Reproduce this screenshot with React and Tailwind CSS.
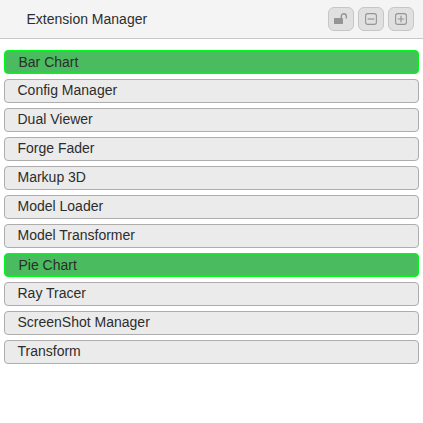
const extensions = [
  { name: 'Bar Chart', active: true },
  { name: 'Config Manager' },
  { name: 'Dual Viewer' },
  { name: 'Forge Fader' },
  { name: 'Markup 3D' },
  { name: 'Model Loader' },
  { name: 'Model Transformer' },
  { name: 'Pie Chart', active: true },
  { name: 'Ray Tracer' },
  { name: 'ScreenShot Manager' },
  { name: 'Transform' },
];

function ToolButton({ label, children }) {
  return (
    <button
      aria-label={label}
      className="flex h-6 w-[26px] items-center justify-center rounded-[6px] border border-[#c6c6c6] bg-[#e0e0e0] text-[#959595]"
    >
      {children}
    </button>
  );
}

function UnlockIcon() {
  return (
    <svg width="14" height="12" viewBox="0 0 14 12" fill="none">
      <rect x="0" y="5" width="9" height="6" rx="0.6" fill="currentColor" />
      <path d="M7.3 5.5V3.2a2.5 2.5 0 0 1 5 0v2.3" stroke="currentColor" strokeWidth="1.4" />
    </svg>
  );
}

function SquareIcon({ plus }) {
  return (
    <svg width="12" height="12" viewBox="0 0 12 12" fill="none" stroke="currentColor">
      <rect x="0.6" y="0.6" width="10.8" height="10.8" rx="2.2" strokeWidth="1.1" />
      <path d={plus ? 'M2.7 6h6.6M6 2.7v6.6' : 'M2.7 6h6.6'} strokeWidth="1.2" />
    </svg>
  );
}

function Row({ name, active }) {
  return (
    <li
      className={
        active
          ? 'flex h-6 items-center rounded-[4px] border border-[#00fa18] bg-[#4abb5e] pl-[13.5px] shadow-[inset_0_0_0_1px_#00fa1880]'
          : 'flex h-6 items-center rounded-[4px] border border-[#adadad] bg-[#ebebeb] pl-[12.5px] pb-[2px]'
      }
    >
      <span className="text-[14px] leading-5">{name}</span>
    </li>
  );
}

export default function App() {
  return (
    <div className="h-[423px] w-[423px] overflow-hidden bg-white font-['Liberation_Sans',Arial,sans-serif] text-[#2d2d2d]">
      <header className="flex h-[39px] items-center justify-between border-b border-[#c8c8c8] bg-[#f4f4f4] pr-[9px] pl-[26.5px]">
        <h1 className="text-[14px] leading-5">Extension Manager</h1>
        <div className="flex gap-1">
          <ToolButton label="Unlock"><UnlockIcon /></ToolButton>
          <ToolButton label="Collapse"><SquareIcon /></ToolButton>
          <ToolButton label="Expand"><SquareIcon plus /></ToolButton>
        </div>
      </header>
      <ul className="flex flex-col gap-[5px] px-1 pt-[11px]">
        {extensions.map((e) => (
          <Row key={e.name} {...e} />
        ))}
      </ul>
    </div>
  );
}
